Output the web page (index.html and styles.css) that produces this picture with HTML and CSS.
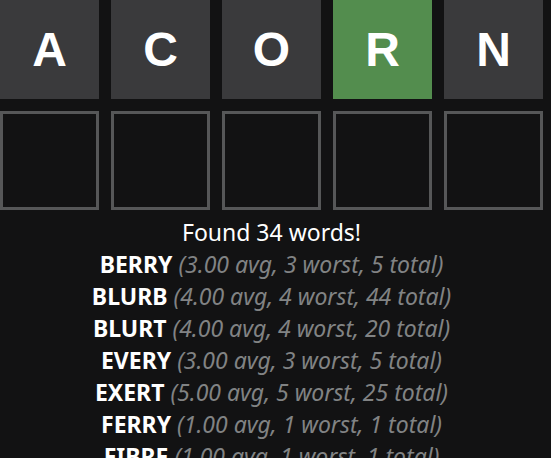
FILE: index.html
```html
<!DOCTYPE html>
<html>
<head>
<meta charset="utf-8">
<link rel="stylesheet" href="styles.css">
</head>
<body>
<div class="app">
  <div class="board">
    <div class="tile filled">A</div>
    <div class="tile filled">C</div>
    <div class="tile filled">O</div>
    <div class="tile correct">R</div>
    <div class="tile filled">N</div>
    <div class="tile empty"></div>
    <div class="tile empty"></div>
    <div class="tile empty"></div>
    <div class="tile empty"></div>
    <div class="tile empty"></div>
  </div>
  <div class="results">
    <div class="line">Found 34 words!</div>
    <div class="line"><b>BERRY</b> <i>(3.00 avg, 3 worst, 5 total)</i></div>
    <div class="line"><b>BLURB</b> <i>(4.00 avg, 4 worst, 44 total)</i></div>
    <div class="line"><b>BLURT</b> <i>(4.00 avg, 4 worst, 20 total)</i></div>
    <div class="line"><b>EVERY</b> <i>(3.00 avg, 3 worst, 5 total)</i></div>
    <div class="line"><b>EXERT</b> <i>(5.00 avg, 5 worst, 25 total)</i></div>
    <div class="line"><b>FERRY</b> <i>(1.00 avg, 1 worst, 1 total)</i></div>
    <div class="line"><b>FIBRE</b> <i>(1.00 avg, 1 worst, 1 total)</i></div>
  </div>
</div>
</body>
</html>
```
FILE: styles.css
```css
html, body {
  margin: 0;
  padding: 0;
  background: #121213;
  overflow: hidden;
}
.app {
  width: 543px;
}
.board {
  display: grid;
  grid-template-columns: repeat(5, 99px);
  grid-auto-rows: 99px;
  gap: 12px;
}
.tile {
  box-sizing: border-box;
  display: flex;
  align-items: center;
  justify-content: center;
  font-family: "Liberation Sans", Arial, sans-serif;
  font-weight: bold;
  font-size: 48px;
  color: #ffffff;
}
.filled { background: #3a3a3c; }
.correct { background: #538d4e; }
.empty { border: 3px solid #565758; }
.results {
  margin-top: 6px;
  text-align: center;
  font-family: "Noto Sans", sans-serif;
  font-size: 23px;
  line-height: 32px;
  color: #ffffff;
  white-space: nowrap;
}
.line b { font-weight: bold; color: #ffffff; }
.line i { font-style: italic; color: #818384; }
```
